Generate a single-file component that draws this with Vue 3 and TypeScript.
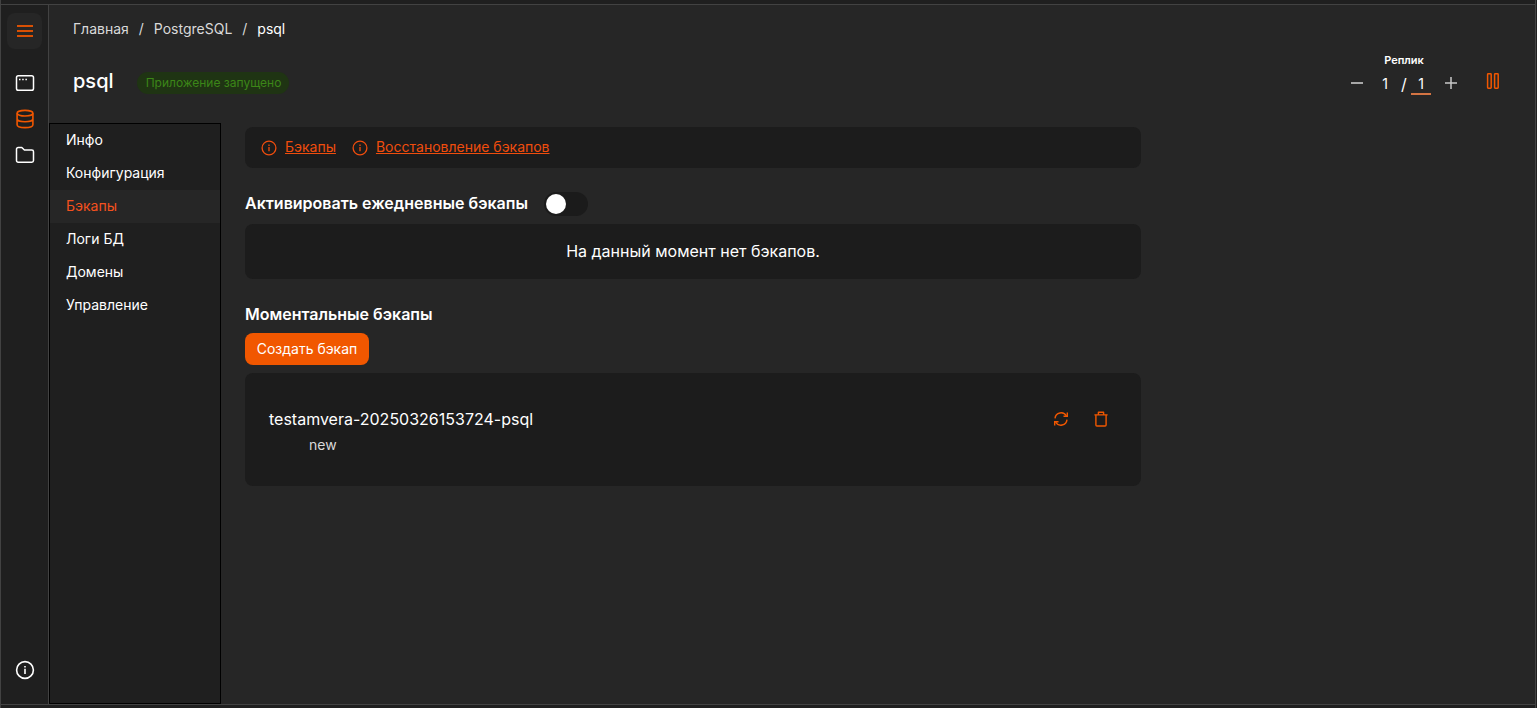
<script setup lang="ts">
import { ref } from 'vue'

interface Backup {
  name: string
  status: string
}

const menu: string[] = ['Инфо', 'Конфигурация', 'Бэкапы', 'Логи БД', 'Домены', 'Управление']
const active = ref('Бэкапы')
const daily = ref(false)
const helpLinks: string[] = ['Бэкапы', 'Восстановление бэкапов']
const backups: Backup[] = [{ name: 'testamvera-20250326153724-psql', status: 'new' }]
</script>

<template>
  <div class="frame">
    <div class="window">
      <aside class="rail">
        <button class="burger" aria-label="Меню">
          <svg width="16" height="14" viewBox="0 0 16 14"><path d="M0 2h16M0 7h16M0 12h16" stroke="currentColor" stroke-width="1.9" /></svg>
        </button>
        <a class="rail-item">
          <svg width="20" height="18" viewBox="0 0 20 18" fill="none" stroke="currentColor" stroke-width="1.5">
            <rect x="1.5" y="1.75" width="17" height="14.5" rx="1.8" />
            <path d="M4 5.5h1.5M7.2 5.5h1.5M10.4 5.5h1.5" />
          </svg>
        </a>
        <a class="rail-item orange">
          <svg width="20" height="20" viewBox="0 0 20 20" fill="none" stroke="currentColor" stroke-width="1.6">
            <ellipse cx="10" cy="4.2" rx="7.9" ry="2.8" />
            <path d="M2.1 4.2v11.6c0 1.6 3.5 2.8 7.9 2.8s7.9-1.2 7.9-2.8V4.2M2.1 10c0 1.5 3.5 2.7 7.9 2.7s7.9-1.2 7.9-2.7" />
          </svg>
        </a>
        <a class="rail-item">
          <svg width="20" height="18" viewBox="0 0 20 18" fill="none" stroke="currentColor" stroke-width="1.5" stroke-linejoin="round">
            <path d="M1.5 3.2c0-1 .7-1.7 1.7-1.7h3.6l2.6 2.5h7.4c1 0 1.7.7 1.7 1.7v8.9c0 1-.7 1.7-1.7 1.7H3.2c-1 0-1.7-.7-1.7-1.7z" />
          </svg>
        </a>
        <a class="rail-item bottom">
          <svg width="20" height="20" viewBox="0 0 20 20" fill="none" stroke="currentColor" stroke-width="1.6">
            <circle cx="10" cy="10" r="8.4" />
            <path d="M10 8.8v5.1M10 6v1.6" />
          </svg>
        </a>
      </aside>

      <main class="page">
        <nav class="crumbs">
          <span>Главная</span><i>/</i><span>PostgreSQL</span><i>/</i><b>psql</b>
        </nav>
        <header class="head">
          <h1>psql</h1>
          <span class="badge">Приложение запущено</span>
          <div class="replicas">
            <div class="label">Реплик</div>
            <div class="counter">
              <svg width="12" height="12" viewBox="0 0 12 12"><path d="M0 6h12" stroke="currentColor" stroke-width="1.6" /></svg>
              <span class="current">1</span><span class="slash">/</span><span class="wanted">1</span>
              <svg width="12" height="12" viewBox="0 0 12 12"><path d="M0 6h12M6 0v12" stroke="currentColor" stroke-width="1.5" /></svg>
            </div>
          </div>
          <svg class="pause" width="14" height="16" viewBox="0 0 14 16" fill="none" stroke="currentColor" stroke-width="1.5">
            <rect x="1.6" y=".8" width="3.6" height="14.4" rx=".7" />
            <rect x="8.6" y=".8" width="3.6" height="14.4" rx=".7" />
          </svg>
        </header>

        <div class="body">
          <ul class="menu">
            <li v-for="item in menu" :key="item" :class="{ active: item === active }" @click="active = item">{{ item }}</li>
          </ul>

          <section class="content">
            <div class="card help">
              <a v-for="link in helpLinks" :key="link" class="help-link">
                <svg width="16" height="16" viewBox="0 0 16 16" fill="none" stroke="currentColor" stroke-width="1.3">
                  <circle cx="8" cy="8" r="6.9" />
                  <path d="M8 7v4.3M8 4.6v1.4" />
                </svg>
                <span>{{ link }}</span>
              </a>
            </div>

            <div class="daily">
              <h2>Активировать ежедневные бэкапы</h2>
              <button class="switch" :class="{ on: daily }" role="switch" :aria-checked="daily" @click="daily = !daily"></button>
            </div>
            <div class="card empty">На данный момент нет бэкапов.</div>

            <h2 class="instant">Моментальные бэкапы</h2>
            <button class="create">Создать бэкап</button>
            <div v-for="backup in backups" :key="backup.name" class="card backup">
              <div class="info">
                <div class="name">{{ backup.name }}</div>
                <div class="status">{{ backup.status }}</div>
              </div>
              <div class="actions">
                <svg width="16" height="16" viewBox="0 0 16 16" fill="none" stroke="currentColor" stroke-width="1.4">
                  <path d="M2 7.3A6.1 6.1 0 0 1 13.4 5M14 8.7A6.1 6.1 0 0 1 2.6 11" />
                  <path d="M14.3 1.6v3.7h-3.8M1.7 14.4v-3.7h3.8" />
                </svg>
                <svg width="16" height="16" viewBox="0 0 16 16" fill="none" stroke="currentColor" stroke-width="1.4" stroke-linejoin="round">
                  <path d="M1.4 3.9h13.2M5.4 3.9V1.3h5.2v2.6M2.9 3.9V14c0 .6.4 1 1 1h8.2c.6 0 1-.4 1-1V3.9" />
                </svg>
              </div>
            </div>
          </section>
        </div>
      </main>
    </div>
  </div>
</template>

<style>
body {
  background: #1f1f1f;
}
</style>

<style scoped>
* {
  box-sizing: border-box;
}
.frame {
  height: 708px;
  width: 1536px;
  padding: 4px 0 3px;
  border-left: 1px solid #424242;
  border-right: 1px solid #424242;
  background: #1f1f1f;
  font-family: Inter, "Noto Sans", sans-serif;
  font-size: 14px;
  line-height: 22px;
  color: #fff;
}
.window {
  display: flex;
  height: 701px;
  border-top: 1px solid #424242;
  border-bottom: 1px solid #424242;
}
button {
  border: 0;
  padding: 0;
  font: inherit;
  color: inherit;
}
h1,
h2,
ul {
  margin: 0;
  padding: 0;
}
svg {
  display: block;
  flex: none;
}
.rail {
  width: 48px;
  flex: none;
  display: flex;
  flex-direction: column;
  align-items: center;
  padding: 8px 0 16px;
  border-right: 1px solid #424242;
}
.burger {
  width: 35px;
  height: 36px;
  margin-bottom: 16px;
  border-radius: 8px;
  background: #262626;
  color: #d95004;
  display: flex;
  align-items: center;
  justify-content: center;
}
.rail-item {
  height: 36px;
  display: flex;
  align-items: center;
}
.orange {
  color: #f15700;
}
.bottom {
  margin-top: auto;
}
.page {
  flex: 1;
  min-width: 0;
  display: flex;
  flex-direction: column;
  background: #262626;
}
.crumbs {
  display: flex;
  padding: 13px 24px 0;
  color: #d9d9d9;
}
.crumbs i {
  width: 25px;
  text-align: center;
  font-style: normal;
}
.crumbs b {
  color: #fff;
  font-weight: 400;
}
.head {
  height: 83px;
  display: flex;
  align-items: flex-start;
  padding: 0 35px 0 24px;
}
h1 {
  width: 64px;
  margin-top: 26px;
  font-size: 20px;
  line-height: 30px;
  font-weight: 500;
}
.badge {
  width: 152px;
  margin-top: 32px;
  padding-left: 1px;
  height: 22px;
  border-radius: 11px;
  background: #1f3413;
  color: #3c8618;
  font-size: 12px;
  text-align: center;
}
.replicas {
  margin: 13px 29px 0 auto;
  width: 106px;
}
.label {
  font-size: 11px;
  line-height: 14px;
  font-weight: 600;
  text-align: center;
}
.counter {
  display: flex;
  align-items: center;
  height: 32px;
  color: #c9c9c9;
}
.current,
.slash,
.wanted {
  flex: none;
  color: #fff;
  text-align: center;
  line-height: 22px;
  padding-top: 1px;
}
.current {
  width: 32px;
  margin-left: 6px;
}
.slash {
  width: 5px;
  font-size: 16px;
  margin-right: 5px;
}
.wanted {
  width: 20px;
  margin-right: 14px;
  height: 23px;
  border-bottom: 2px solid #d47443;
}
.pause {
  margin-top: 33px;
  color: #f15700;
}
.body {
  flex: 1;
  display: flex;
}
.menu {
  width: 172px;
  list-style: none;
  border: 1px solid #000;
  background: #1f1f1f;
}
.menu li {
  height: 33px;
  padding-left: 16px;
  line-height: 32px;
}
.menu .active {
  color: #f4511e;
  background: #262626;
}
.content {
  width: 896px;
  margin: 4px 0 0 24px;
}
.card {
  border-radius: 8px;
  background: #1c1c1c;
}
.help {
  height: 41px;
  padding: 0 16px;
  display: flex;
  align-items: center;
  gap: 16px;
}
.help-link {
  display: flex;
  align-items: center;
  gap: 8px;
  color: #f04d0d;
  text-decoration: underline;
}
.help-link span {
  padding-bottom: 2px;
}
h2 {
  font-size: 16px;
  line-height: 24px;
  font-weight: 600;
}
.daily {
  display: flex;
  align-items: center;
  margin: 24px 0 8px;
}
.daily h2 {
  height: 24px;
  line-height: 22px;
}
.switch {
  width: 44px;
  height: 24px;
  margin-left: 16px;
  padding: 2px;
  border-radius: 12px;
  background: #1b1b1b;
}
.switch::before {
  content: "";
  display: block;
  width: 20px;
  height: 20px;
  border-radius: 50%;
  background: #fff;
}
.switch.on {
  background: #f15700;
}
.switch.on::before {
  margin-left: auto;
}
.empty {
  height: 55px;
  line-height: 55px;
  font-size: 16px;
  text-align: center;
}
.instant {
  margin-top: 23px;
}
.create {
  display: block;
  width: 124px;
  height: 32px;
  margin: 7px 0 8px;
  border-radius: 8px;
  background: #f15700;
}
.backup {
  height: 113px;
  display: flex;
  justify-content: space-between;
  padding: 34px 32px 0 24px;
}
.name {
  font-size: 16px;
  line-height: 24px;
}
.status {
  margin: 3px 0 0 40px;
  color: #d9d9d9;
}
.actions {
  display: flex;
  gap: 24px;
  padding-top: 4px;
  color: #f15700;
}
</style>
